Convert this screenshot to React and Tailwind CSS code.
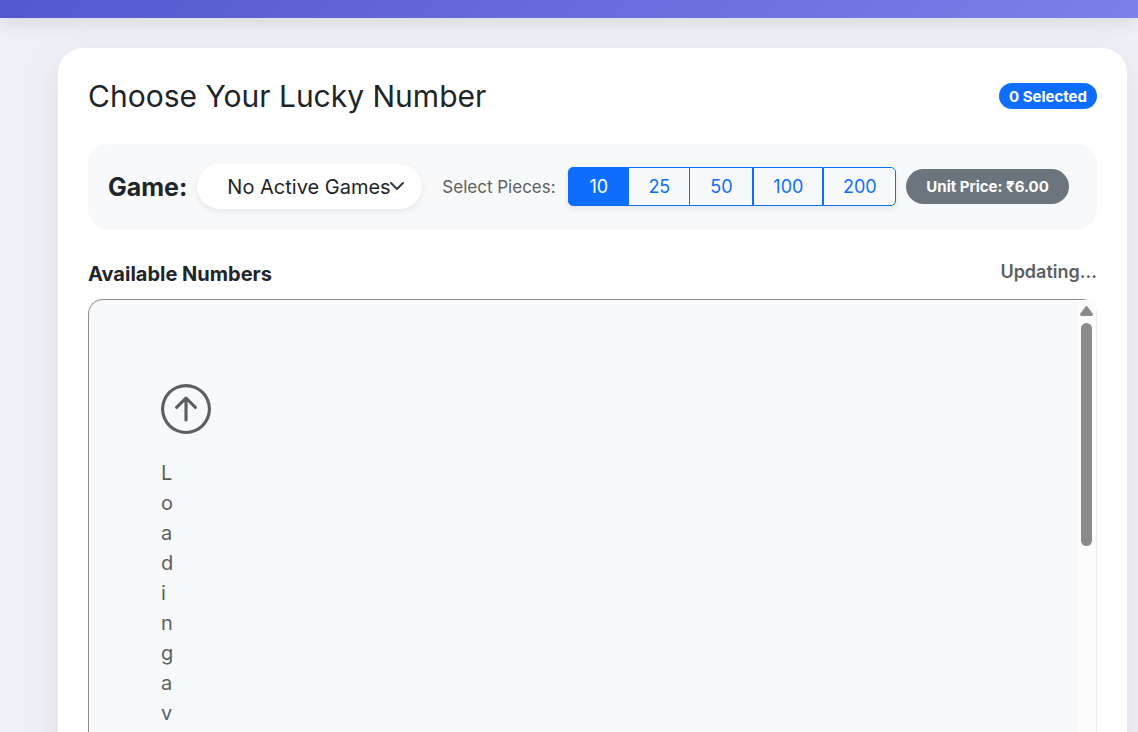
import { BsArrowUpCircle } from "react-icons/bs";
import { useState } from "react";

const pieces = [
  { value: 10, className: "w-[61px] rounded-l-[5px]" },
  { value: 25, className: "w-[61px] border-l-0" },
  { value: 50, className: "w-[63px] border-l-0" },
  { value: 100, className: "w-[70px]" },
  { value: 200, className: "w-[73px] rounded-r-[5px]" },
];

export default function App() {
  const [selected, setSelected] = useState(10);

  return (
    <div className="flex min-h-screen flex-col bg-[#f0f1f6] font-[Inter,sans-serif] text-[#212529]">
      <header className="h-[18px] bg-linear-[135deg,#5358cd,#7c7eea] shadow-[0_4px_20px_rgba(0,0,0,0.12)]" />

      <main className="mt-[30px] mr-[11px] ml-[58px] rounded-[25px] bg-white p-[30px] shadow-[0_10px_40px_rgba(0,0,0,0.08)]">
        <div className="flex h-9 items-center justify-between">
          <h1 className="text-[30px] leading-9 font-normal">Choose Your Lucky Number</h1>
          <span className="h-[26px] rounded-full bg-[#0d6efd] px-[10px] text-[15px] leading-7 font-bold text-white">
            0 Selected
          </span>
        </div>

        <section className="mt-[30px] flex h-[85px] items-center rounded-[20px] bg-[#f8f9fb] px-5">
          <label htmlFor="game" className="text-[25px] leading-[38px] font-bold">
            Game:
          </label>
          <div className="relative ml-[10px] w-[225px]">
            <select
              id="game"
              className="h-[45px] w-full appearance-none rounded-full bg-white pl-[30px] text-xl shadow-[0_3px_6px_rgba(0,0,0,0.075)]"
            >
              <option>No Active Games</option>
            </select>
            <svg
              viewBox="0 0 16 16"
              className="pointer-events-none absolute top-[14px] right-[17px] size-4"
              fill="none"
              stroke="#343a40"
              strokeWidth="2"
              strokeLinecap="round"
              strokeLinejoin="round"
            >
              <path d="m2 5 6 6 6-6" />
            </svg>
          </div>

          <span id="pieces-label" className="ml-5 w-[116px] text-[17px] leading-7 whitespace-nowrap text-[#5c5f62]">
            Select Pieces:
          </span>
          <div
            role="group"
            aria-labelledby="pieces-label"
            className="ml-[10px] flex rounded-[5px] shadow-[0_3px_6px_rgba(0,0,0,0.075)]"
          >
            {pieces.map(({ value, className }) => (
              <button
                key={value}
                type="button"
                aria-pressed={selected === value}
                onClick={() => setSelected(value)}
                className={`${className} h-[39px] border border-[#0d6efd] text-[18px] ${
                  selected === value ? "bg-[#0d6efd] text-white" : "bg-[#f8f9fb] text-[#0d6efd]"
                }`}
              >
                {value}
              </button>
            ))}
          </div>
          <span className="ml-[10px] rounded-full bg-[#6c757d] px-5 text-[15px] leading-[35px] font-bold text-white">
            Unit Price: ₹6.00
          </span>
        </section>

        <div className="mt-[30px] flex items-start justify-between">
          <h2 className="pt-[3px] text-xl leading-6 font-bold">Available Numbers</h2>
          <span className="text-[18px] leading-[26px] font-semibold text-[#5c5f62]">Updating...</span>
        </div>

        <section className="mt-[13px] flex h-[500px] rounded-[15px] border border-t-[#8f9092] border-r-[#ececee] border-b-[#ececee] border-l-[#8f9092] bg-[#f8f9fb]">
          <div className="flex-1 overflow-hidden px-[72px] pt-[84px] text-[#5c5f62]">
            <BsArrowUpCircle className="size-[50px]" />
            <p className="mt-6 w-3 text-xl leading-[30px] break-all">Loading available numbers...</p>
          </div>
          <div aria-hidden="true" className="flex w-[19px] flex-col items-center bg-[#fcfcfc] pt-[6px]">
            <svg viewBox="0 0 13 10" className="h-[10px] w-[13px]" fill="#8b8b8b">
              <path d="M5.2.9a1.6 1.6 0 0 1 2.6 0l4.8 6.6A1.6 1.6 0 0 1 11.3 10H1.7A1.6 1.6 0 0 1 .4 7.5z" />
            </svg>
            <div className="mt-[7px] h-[223px] w-[11px] rounded-full bg-[#8b8b8b]" />
          </div>
        </section>
      </main>
    </div>
  );
}
